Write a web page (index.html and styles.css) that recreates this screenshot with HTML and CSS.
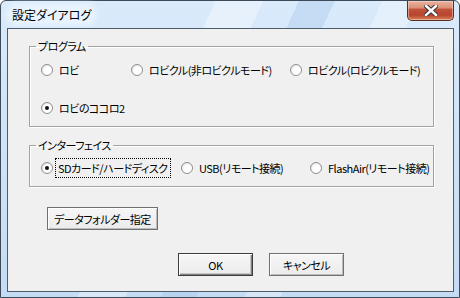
FILE: index.html
```html
<!DOCTYPE html>
<html lang="ja">
<head>
<meta charset="UTF-8">
<title>設定ダイアログ</title>
<link rel="stylesheet" href="styles.css">
</head>
<body>
<div class="window">
    <div class="titlebar">
        <span class="title">設定ダイアログ</span>
        <button class="close" aria-label="閉じる">
            <svg width="14" height="11" viewBox="0 0 14 11">
                <path d="M2 1 L12 10 M12 1 L2 10" stroke="#3a3a3a" stroke-width="4.5" stroke-linecap="square"/>
                <path d="M2 1 L12 10 M12 1 L2 10" stroke="#fff" stroke-width="2.4" stroke-linecap="square"/>
            </svg>
        </button>
    </div>

    <div class="client">
        <fieldset class="group">
            <legend>プログラム</legend>
            <div class="row">
                <label class="opt w90"><input type="radio" name="prog"><span>ロビ</span></label>
                <label class="opt w159"><input type="radio" name="prog"><span>ロビクル(非ロビクルモード)</span></label>
                <label class="opt"><input type="radio" name="prog"><span>ロビクル(ロビクルモード)</span></label>
            </div>
            <div class="row">
                <label class="opt"><input type="radio" name="prog" checked><span>ロビのココロ2</span></label>
            </div>
        </fieldset>

        <fieldset class="group second">
            <legend>インターフェイス</legend>
            <div class="row">
                <label class="opt w140"><input type="radio" name="iface" checked><span class="focus">SDカード/ハードディスク</span></label>
                <label class="opt w129"><input type="radio" name="iface"><span>USB(リモート接続)</span></label>
                <label class="opt"><input type="radio" name="iface"><span>FlashAir(リモート接続)</span></label>
            </div>
        </fieldset>

        <button class="btn folder">データフォルダー指定</button>

        <div class="actions">
            <button class="btn default">OK</button>
            <button class="btn">キャンセル</button>
        </div>
    </div>
</div>
</body>
</html>
```

FILE: styles.css
```css
*{box-sizing:border-box;margin:0;padding:0;}
body{
    font-family:"Noto Sans CJK JP","Liberation Sans",sans-serif;
    font-size:11px;
    letter-spacing:-0.5px;
    background:#fff;
}
.window{
    width:460px;
    height:298px;
    border:1px solid #3c4a5a;
    border-radius:6px 6px 0 0;
    background:
        linear-gradient(115deg,transparent 0 36%,rgba(255,255,255,.35) 36% 44%,transparent 44% 50%,rgba(160,195,230,.35) 50% 56%,transparent 56% 64%,rgba(255,255,255,.3) 64% 70%,transparent 70%),
        linear-gradient(#d9eafb,#c4dcf4);
    padding:0 5px 5px 6px;
    display:flex;
    flex-direction:column;
    font-feature-settings:"palt";
}
.titlebar{
    height:27px;
    display:flex;
    align-items:flex-start;
    padding-left:2px;
}
.title{
    margin-top:5px;
    padding:0 3px;
    font-size:12px;
    letter-spacing:0;
    line-height:17px;
    border-radius:8px;
    background:rgba(235,245,255,.8);
    box-shadow:0 0 6px 3px rgba(235,245,255,.8);
    color:#000;
}
.close{
    margin-left:auto;
    width:47px;
    height:20px;
    border:1px solid #5a2c24;
    border-top:none;
    border-radius:0 0 5px 5px;
    background:linear-gradient(#eab4a2 0%,#dc9078 35%,#c0503a 45%,#b8462e 75%,#d8845e 100%);
    display:flex;
    align-items:center;
    justify-content:center;
    box-shadow:inset 0 0 0 1px rgba(255,220,200,.5);
}
.client{
    flex:1;
    background:#f0f0f0;
    border:1px solid #4e5c6c;
    padding:10px 0 0 21px;
}
.group{
    width:405px;
    border:1px solid #a3a3a3;
    box-shadow:inset 1px 1px #fff,1px 1px #fff;
    padding:9px 0 10px 11px;
}
.group legend{
    margin-left:-5px;
    padding:0 2px;
    line-height:14px;
}
.second{
    margin-top:11px;
    padding-top:8px;
}
.row{
    display:flex;
    height:16px;
    align-items:center;
}
.row + .row{
    margin-top:22px;
}
.opt{
    display:inline-flex;
    align-items:center;
    white-space:nowrap;
}
.w90{width:90px;}
.w159{width:159px;}
.w140{width:140px;}
.w129{width:129px;}
.opt input{
    appearance:none;
    flex:none;
    width:12px;
    height:12px;
    border-radius:50%;
    border:1px solid #8e8f8f;
    background:radial-gradient(circle at 60% 60%,#fff 0 45%,#e2e2e2 80%);
    margin-right:6px;
    display:grid;
    place-items:center;
}
.opt input:checked::after{
    content:"";
    width:4px;
    height:4px;
    border-radius:50%;
    background:#111;
}
.focus{
    outline:1px dotted #000;
    outline-offset:1px;
    margin-left:-2px;
    padding:0 1px;
}
.btn{
    font:inherit;
    font-feature-settings:"palt";
    letter-spacing:-0.5px;
    white-space:nowrap;
    color:#000;
    background:linear-gradient(#f6f6f6,#ebebeb);
    border:1px solid #707070;
    box-shadow:inset 1px 1px #fff,inset -1px -1px #bcbcbc;
    height:23px;
    padding:0;
}
.folder{
    display:block;
    width:111px;
    margin:20px 0 0 18px;
}
.actions{
    display:flex;
    gap:16px;
    margin:23px 0 0 149px;
}
.actions .btn{
    width:75px;
}
.default{
    border-color:#3c3c3c;
    box-shadow:inset 1px 1px #fff,inset -1px -1px #808080,inset -2px -2px #c4c4c4;
}
```
